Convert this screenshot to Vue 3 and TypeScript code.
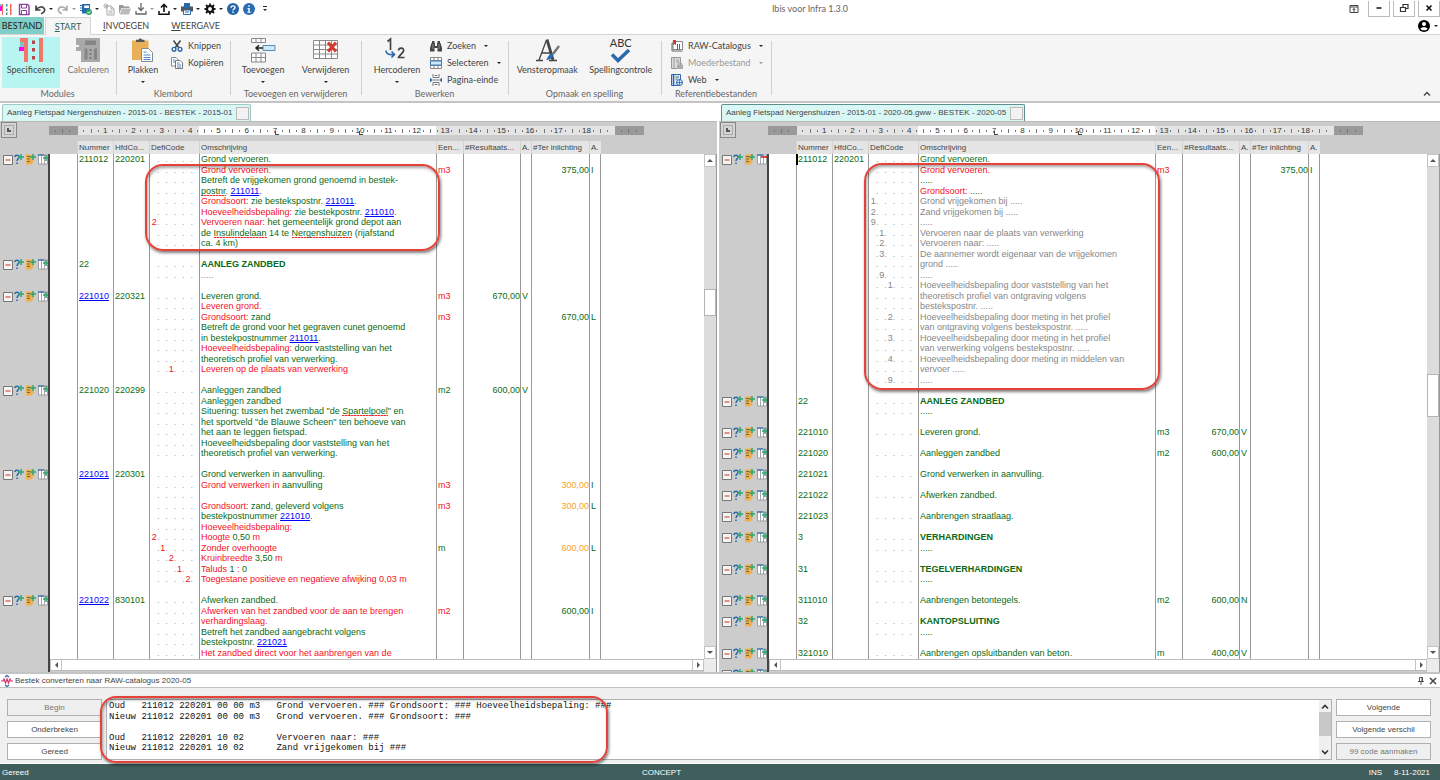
<script setup lang="ts">
interface Row {
  n?: string
  link?: boolean
  h?: string
  c?: string
  d?: string
  u?: string
  res?: string
  a?: string
  ter?: string
  b?: string
  blank?: boolean
  minus?: boolean
}
interface Seg { k: string; t: string }
interface Doc { title: string; rows: Row[]; thumb: string; caret: boolean }

/* Text markup: "r:" red, "g:" green, "x:" grey, "b:" bold, "l:" link, "s:" misspelled; parts split by "|". */
const parse = (s = ''): Seg[] =>
  s.split('|').filter(Boolean).map((p) => ({ k: p.slice(0, 1), t: p.slice(2) }))

/* Definition code: "<position><digit><colour>", for example "02r". */
const digit = (row: Row, i: number): string => (row.c && Number(row.c[0]) === i ? row.c[1] : '')

const gap: Row = { blank: true }

const left: Row[] = [
  { n: '211012', h: '220201', d: 'g:Grond vervoeren.' },
  { d: 'r:Grond vervoeren.', u: 'r:m3', ter: 'g:375,00', b: 'I' },
  { d: 'g:Betreft de vrijgekomen grond genoemd in bestek-' },
  { d: 's:postnr|g:. |l:211011|g:.' },
  { d: 'r:Grondsoort:|g: zie bestekspostnr. |l:211011|g:.' },
  { d: 'r:Hoeveelheidsbepaling:|g: zie bestekpostnr. |l:211010|g:.' },
  { c: '02r', d: 'r:Vervoeren naar:|g: het gemeentelijk grond depot aan' },
  { d: 'g:de |s:Insulindelaan|g: 14 te |s:Nergenshuizen|g: (rijafstand' },
  { d: 'g:ca. 4 km)' },
  gap,
  { n: '22', d: 'b:AANLEG ZANDBED' },
  { d: 'x:.....' },
  gap,
  { n: '221010', link: true, h: '220321', d: 'g:Leveren grond.', u: 'r:m3', res: '670,00', a: 'V' },
  { d: 'r:Leveren grond.' },
  { d: 'r:Grondsoort:|g: zand', u: 'r:m3', ter: 'g:670,00', b: 'L' },
  { d: 'g:Betreft de grond voor het gegraven cunet genoemd' },
  { d: 'g:in bestekpostnummer |l:211011|g:.' },
  { d: 'r:Hoeveelheidsbepaling:|g: door vaststelling van het' },
  { d: 'g:theoretisch profiel van verwerking.' },
  { c: '21r', d: 'r:Leveren op de plaats van verwerking' },
  gap,
  { n: '221020', h: '220299', d: 'g:Aanleggen zandbed', u: 'g:m2', res: '600,00', a: 'V' },
  { d: 'g:Aanleggen zandbed' },
  { d: 'g:Situering: tussen het zwembad "de |s:Spartelpoel|g:" en' },
  { d: 'g:het sportveld "de Blauwe Scheen" ten behoeve van' },
  { d: 'g:het aan te leggen fietspad.' },
  { d: 'g:Hoeveelheidsbepaling door vaststelling van het' },
  { d: 'g:theoretisch profiel van verwerking.' },
  gap,
  { n: '221021', link: true, h: '220301', d: 'g:Grond verwerken in aanvulling.' },
  { d: 'r:Grond verwerken in |g:aanvulling', u: 'r:m3', ter: 'o:300,00', b: 'I' },
  {},
  { d: 'r:Grondsoort:|g: zand, geleverd volgens', u: 'r:m3', ter: 'o:300,00', b: 'L' },
  { d: 'g:bestekpostnummer |l:221010|g:.' },
  { d: 'r:Hoeveelheidsbepaling:' },
  { c: '02r', d: 'r:Hoogte |g:0,50|r: m' },
  { c: '11r', d: 'r:Zonder overhoogte', u: 'g:m', ter: 'o:600,00', b: 'L' },
  { c: '22r', d: 'r:Kruinbreedte |g:3,50|r: m' },
  { c: '31r', d: 'r:Taluds |g:1 |r:: |g:0' },
  { c: '42r', d: 'r:Toegestane positieve en negatieve afwijking 0,03 m' },
  gap,
  { n: '221022', link: true, h: '830101', d: 'g:Afwerken zandbed.' },
  { d: 'r:Afwerken van het zandbed voor de aan te brengen', u: 'r:m2', ter: 'g:600,00', b: 'I' },
  { d: 'r:verhardingslaag.' },
  { d: 'g:Betreft het zandbed aangebracht volgens' },
  { d: 'g:bestekpostnr. |l:221021' },
  { d: 'r:Het zandbed direct voor het aanbrengen van de' },
  gap, gap,
]

const right: Row[] = [
  { n: '211012', h: '220201', d: 'g:Grond vervoeren.', minus: true },
  { d: 'r:Grond vervoeren.', u: 'r:m3', ter: 'g:375,00', b: 'I' },
  { d: 'g:.....' },
  { d: 'r:Grondsoort:|g: .....' },
  { c: '01x', d: 'x:Grond vrijgekomen bij .....' },
  { c: '02x', d: 'x:Zand vrijgekomen bij .....' },
  { c: '09x', d: 'x:.....' },
  { c: '11x', d: 'x:Vervoeren naar de plaats van verwerking' },
  { c: '12x', d: 'x:Vervoeren naar: .....' },
  { c: '13x', d: 'x:De aannemer wordt eigenaar van de vrijgekomen' },
  { d: 'x:grond .....' },
  { c: '19x', d: 'x:.....' },
  { c: '21x', d: 'x:Hoeveelheidsbepaling door vaststelling van het' },
  { d: 'x:theoretisch profiel van ontgraving volgens' },
  { d: 'x:bestekspostnr. .....' },
  { c: '22x', d: 'x:Hoeveelheidsbepaling door meting in het profiel' },
  { d: 'x:van ontgraving volgens bestekspostnr. .....' },
  { c: '23x', d: 'x:Hoeveelheidsbepaling door meting in het profiel' },
  { d: 'x:van verwerking volgens bestekspostnr. .....' },
  { c: '24x', d: 'x:Hoeveelheidsbepaling door meting in middelen van' },
  { d: 'x:vervoer .....' },
  { c: '29x', d: 'x:.....' },
  gap,
  { n: '22', d: 'b:AANLEG ZANDBED' },
  { d: 'g:.....' },
  gap,
  { n: '221010', d: 'g:Leveren grond.', u: 'g:m3', res: '670,00', a: 'V' },
  gap,
  { n: '221020', d: 'g:Aanleggen zandbed', u: 'g:m2', res: '600,00', a: 'V' },
  gap,
  { n: '221021', d: 'g:Grond verwerken in aanvulling.' },
  gap,
  { n: '221022', d: 'g:Afwerken zandbed.' },
  gap,
  { n: '221023', d: 'g:Aanbrengen straatlaag.' },
  gap,
  { n: '3', d: 'b:VERHARDINGEN' },
  { d: 'g:.....' },
  gap,
  { n: '31', d: 'b:TEGELVERHARDINGEN' },
  { d: 'g:.....' },
  gap,
  { n: '311010', d: 'g:Aanbrengen betontegels.', u: 'g:m2', res: '600,00', a: 'N' },
  gap,
  { n: '32', d: 'b:KANTOPSLUITING' },
  { d: 'g:.....' },
  gap,
  { n: '321010', d: 'g:Aanbrengen opsluitbanden van beton.', u: 'g:m', res: '400,00', a: 'V' },
  gap,
  { n: '321020' },
]

const docs: Doc[] = [
  { title: 'Aanleg Fietspad Nergenshuizen - 2015-01 - BESTEK - 2015-01', rows: left, thumb: 'thumb-a', caret: false },
  { title: 'Aanleg Fietspad Nergenshuizen - 2015-01 - 2020-05.gww - BESTEK - 2020-05', rows: right, thumb: 'thumb-b', caret: true },
]

const heads = ['', 'Nummer', 'HfdCo...', 'DefiCode', 'Omschrijving', 'Een...', '#Resultaats...', 'A.', '#Ter inlichting', 'A.']

/* Ruler marks, four to a centimetre. */
const marks = Array.from({ length: 85 }, (_, s) => {
  const cm = s / 4 - 1
  if (s % 4 === 0) return { cls: 'num', t: cm >= 1 && cm <= 18 ? String(cm) : '', stop: cm === 7 || cm === 10 }
  return { cls: s % 2 ? 'dot' : 'bar', t: '', stop: false }
})

const log = [
  'Oud   211012 220201 00 00 m3   Grond vervoeren. ### Grondsoort: ### Hoeveelheidsbepaling: ###',
  'Nieuw 211012 220201 00 00 m3   Grond vervoeren. ### Grondsoort: ###',
  '',
  'Oud   211012 220201 10 02      Vervoeren naar: ###',
  'Nieuw 211012 220201 10 02      Zand vrijgekomen bij ###',
]

const icons: Record<string, string> = {
  app: '<path d="M0 1h3v2H0z" fill="#7ec8c4"/><path d="M0 3h2v5H0z" fill="#f0f"/><path d="M2 1h1v11H2zM10 1h1.500v11H10z" fill="#f2655a"/><path d="M6 1h1.500v2.500H6zM6 5.500h1.500V8H6zM6 9.500h1.500V12H6z" fill="#4c8f8a"/>',
  save: '<path d="M1.500 1.500h8l1.500 1.500v8.500H1.500z" fill="#fff" stroke="#8a3f9d" stroke-width="1.400"/><path d="M3.500 1.500h5v3.500h-5z" fill="#fff" stroke="#8a3f9d"/><path d="M3.500 11V7.500h5V11" fill="#fff" stroke="#8a3f9d"/>',
  undo: '<path d="M2 2.500v4.500h4.500M2.500 6.500C4 4 9 2.500 10.500 6c.7 2-.8 4-3.500 4.800" fill="none" stroke="#444" stroke-width="1.700"/>',
  redo: '<path d="M10 2.500v4.500H5.500M9.500 6.500C8 4 3 2.500 1.500 6c-.7 2 .8 4 3.500 4.800" fill="none" stroke="#aaa" stroke-width="1.700"/>',
  book: '<path d="M2 1h8v9.500H2z" fill="#2b69ad"/><path d="M4.200 2.500H9V5H4.200z" fill="#fff"/><path d="M0 2.500h3M0 5h3M0 7.500h3" stroke="#2b69ad"/><circle cx="9" cy="9" r="3" fill="#2aa06b"/><path d="M7.500 9l1.200 1.200L10.600 8" fill="none" stroke="#fff"/>',
  new: '<path d="M4 3h4l3 3v6H4z" fill="#fff" stroke="#aaa"/><path d="M8 3v3h3M5.500 8h4M5.500 10h4" fill="none" stroke="#aaa"/><path d="M3 0v6M0 3h6M1 1l4 4M5 1L1 5" stroke="#aaa" stroke-width=".8"/>',
  folder: '<path d="M0 2h4l1 1.500h5.500V5H2.500L0 11z" fill="#999"/><path d="M3 5.500h9L10 11.500H.8z" fill="#bbb"/>',
  down: '<path d="M6 0v7M3.200 4.500L6 7.500l2.800-3" fill="none" stroke="#666" stroke-width="1.300"/><path d="M1 8v3h10V8" fill="none" stroke="#666" stroke-width="1.300"/>',
  up: '<path d="M6 9V1.500M3 4.500L6 1.300l3 3.200" fill="none" stroke="#111" stroke-width="1.600"/><path d="M1 8v3.200h10V8" fill="none" stroke="#111" stroke-width="1.500"/>',
  print: '<path d="M3 0h6v4H3z" fill="#2b69ad"/><path d="M0 3.500h12v5H0z" fill="#555"/><path d="M2.500 3.500h7V5h-7z" fill="#2b69ad"/><path d="M2.500 7h7v4.500h-7z" fill="#fff" stroke="#2b69ad"/><path d="M4 9h4" stroke="#2b69ad"/>',
  gear: '<circle cx="6" cy="6" r="3" fill="none" stroke="#111" stroke-width="2.200"/><path d="M6 .5V3M6 9v2.500M.5 6H3M9 6h2.500M2 2l1.800 1.800M8.200 8.200L10 10M10 2L8.200 3.800M3.800 8.200L2 10" stroke="#111" stroke-width="1.800"/>',
  help: '<circle cx="6" cy="6" r="6" fill="#2564a5"/><path d="M4 4.700C4 2.300 8 2.300 8 4.600 8 6 6 6 6 7.500" fill="none" stroke="#fff" stroke-width="1.400"/><path d="M5.300 8.500h1.400V10H5.300z" fill="#fff"/>',
  info: '<circle cx="6" cy="6" r="6" fill="#2b6db5"/><path d="M5.300 2.300h1.400v1.400H5.300zM4.500 5h2.200v3.700h1v1H4.300v-1h1V6h-.8z" fill="#fff"/>',
  cut: '<path d="M2.500.5L8 8M9.500.5L4 8" stroke="#444" stroke-width="1.500"/><circle cx="3" cy="9.300" r="1.900" fill="none" stroke="#2b69ad" stroke-width="1.400"/><circle cx="9" cy="9.300" r="1.900" fill="none" stroke="#2b69ad" stroke-width="1.400"/>',
  copy: '<path d="M.5.5h4.500l2 2V9H.5z" fill="#fff" stroke="#888"/><path d="M4.500 3.500H9l2.500 2.500v5.500h-7z" fill="#fff" stroke="#777"/><path d="M6 6h2.500M6 8h4M6 10h4M2 3h2M2 5h2" stroke="#4a86c5"/>',
  find: '<path d="M2 1h2.500v2H2zM7.500 1H10v2H7.500zM1.500 3h3.500v3h2V3h3.500l1.500 5v3.500H7.500V8h-3v3.500H0V8z" fill="#444"/><path d="M3 4v5M9 4v5" stroke="#aaa" stroke-width=".7"/>',
  select: '<path d="M.5.5h11v11H.5zM.5 3.500h11M.5 8.500h11M4 .5v3M8 .5v3M4 8.500v3M8 8.500v3" fill="#fff" stroke="#888"/><path d="M.5 4h11v4H.5z" fill="#cfe8fa" stroke="#3f7cb8"/>',
  page: '<path d="M3 0v3.500h6V0M3 12V8.500h6V12" fill="#fff" stroke="#777"/><path d="M4.500 1.500h3M4.500 10.500h3M2.500 6h7" stroke="#777"/><path d="M0 3.500L2.500 6 0 8.500zM12 3.500L9.500 6 12 8.500z" fill="#2b69ad"/>',
  raw: '<path d="M2 1.500h9.500v8H2z" fill="#fff" stroke="#888"/><path d="M1 3v8h10.500M6.500 4v5.500M8.500 4v5.500" fill="none" stroke="#666"/><path d="M2 0h3v5L3.500 4 2 5z" fill="#d0392b"/>',
  mother: '<path d="M.5.5h9v11h-9zM3 .5v11M5 3h3M5 5h3" fill="#ddd" stroke="#999"/><path d="M6 7.500h6V12H6z" fill="#aaa"/><path d="M7.500 7.500V6h3v1.500" fill="none" stroke="#aaa"/>',
  web: '<path d="M.5.5h9v11h-9z" fill="#dce9f6" stroke="#2b69ad"/><path d="M2.500.5v11" stroke="#2b69ad" stroke-width="1.500"/><path d="M4.500 3h3.500M4.500 5h2" stroke="#666"/><circle cx="8.500" cy="8.500" r="3" fill="#dce9f6" stroke="#2b69ad"/><path d="M5.500 8.500h6M8.500 5.500v6" stroke="#2b69ad" stroke-width=".8"/>',
  spec: '<path d="M2 0h8v4H2z" fill="#f2766a"/><path d="M2 4h5v5H2z" fill="#7cc7c4"/><path d="M1 9h5v4H1z" fill="#f0f"/><path d="M6 4h4v20H6zM21 0h4v24h-4z" fill="#f2766a"/><path d="M14 2.500h3V6h-3zM14 10h3v3.500h-3zM14 18h3v3.500h-3z" fill="#b5474a"/>',
  calc: '<path d="M0 0h24v24H5V13H0V9h3V7H0z" fill="#a9a9a9"/><path d="M9 2.500h11V7H9z" fill="#858585"/><path d="M8.500 10.500h3v11h-3zM18 10.500h3v11h-3z" fill="#858585"/><path d="M13.500 11h2v2h-2zM13.500 15h2v2h-2zM13.500 19h2v2h-2z" fill="#777"/>',
  paste: '<path d="M1 2.500h16.500V22H1z" fill="#e8b057"/><path d="M5 4V1.800h2.500C8 .2 10.500.2 11 1.800h2.500V4z" fill="#555"/><path d="M10.500 10.500h7l4 4v9h-11z" fill="#fff" stroke="#888"/><path d="M12.500 14h3M12.500 17h7M12.500 19.500h7M12.500 21.500h7" stroke="#4a86c5"/>',
  add: '<path d="M.5.5h14v4H.5zM5 .5v4M10 .5v4M.5 15h14v9H.5zM.5 19.500h14M5 15v9M10 15v9" fill="#fff" stroke="#888"/><path d="M12 7.500h12v5H12z" fill="#cfe8fa" stroke="#5a8db8"/><path d="M5 10h7M8 7.200L5 10l3 2.800" fill="none" stroke="#222" stroke-width="1.500"/>',
  del: '<path d="M.5 2.500h24v18H.5zM.5 7h24M.5 11.500h24M.5 16h24M6.500 2.500v18M12.500 2.500v18M18.500 2.500v18" fill="#fff" stroke="#888"/><path d="M15 4.500l8 9M23 4.500l-8 9" stroke="#d0392b" stroke-width="3"/>',
  recode: '<path d="M2.500 3.500L5.500 1v11M13.500 12.500c.5-3.500 6-3 5 .5-.5 2-4 4-5 6.500h6" fill="none" stroke="#444" stroke-width="1.700"/><path d="M1 12.500c0 3.500 3 4.500 8 4M6.500 13.500l3 3-3 3" fill="none" stroke="#2b69ad" stroke-width="1.700"/>',
  format: '<path d="M1 22.500h7M14 22.500h8M4 22L11.500 2M7 15h8" fill="none" stroke="#444" stroke-width="1.300"/><path d="M12 1.500L18 22" stroke="#444" stroke-width="2.800"/><path d="M24 8l-6 8" stroke="#777" stroke-width="2.500"/><path d="M17.500 15.500c2 2 .5 6-6.500 6.500 2-1.500 1.500-6 6.500-6.500z" fill="#2b69ad"/>',
  spell: '<path d="M1 5.500l6 6L18 1" fill="none" stroke="#2b69ad" stroke-width="3.500"/>',
  conv: '<path d="M0 6h2l1-2 1.500 4L6 4l1.500 4L9 4l1 2h2" fill="none" stroke="#d6336c" stroke-width="1.200"/><path d="M4 2l2-1.500L8 2M4 10l2 1.500L8 10" fill="none" stroke="#2b69ad" stroke-width="1.300"/>',
}

interface Quick { icon: string; label: string; menu?: boolean; off?: boolean }
const quick: Quick[] = [
  { icon: 'save', label: 'Opslaan' },
  { icon: 'undo', label: 'Ongedaan maken', menu: true },
  { icon: 'redo', label: 'Opnieuw', menu: true, off: true },
  { icon: 'book', label: 'Controleren', menu: true },
  { icon: 'new', label: 'Nieuw', off: true },
  { icon: 'folder', label: 'Openen', off: true },
  { icon: 'down', label: 'Importeren', menu: true, off: true },
  { icon: 'up', label: 'Exporteren', menu: true },
  { icon: 'print', label: 'Afdrukken', menu: true },
  { icon: 'gear', label: 'Instellingen', menu: true },
  { icon: 'help', label: 'Help' },
  { icon: 'info', label: 'Info' },
]

interface Cmd { icon: string; label: string; menu?: boolean; off?: boolean; on?: boolean; abc?: boolean }
interface Group { name: string; cls: string; big: Cmd[]; small: Cmd[] }
const groups: Group[] = [
  { name: 'Modules', cls: 'g1', big: [{ icon: 'spec', label: 'Specificeren', on: true }, { icon: 'calc', label: 'Calculeren', off: true }], small: [] },
  { name: 'Klembord', cls: 'g2', big: [{ icon: 'paste', label: 'Plakken', menu: true }], small: [{ icon: 'cut', label: 'Knippen' }, { icon: 'copy', label: 'Kopiëren' }] },
  { name: 'Toevoegen en verwijderen', cls: 'g3', big: [{ icon: 'add', label: 'Toevoegen', menu: true }, { icon: 'del', label: 'Verwijderen', menu: true }], small: [] },
  { name: 'Bewerken', cls: 'g4', big: [{ icon: 'recode', label: 'Hercoderen', menu: true }], small: [{ icon: 'find', label: 'Zoeken', menu: true }, { icon: 'select', label: 'Selecteren', menu: true }, { icon: 'page', label: 'Pagina-einde' }] },
  { name: 'Opmaak en spelling', cls: 'g5', big: [{ icon: 'format', label: 'Vensteropmaak' }, { icon: 'spell', label: 'Spellingcontrole', abc: true }], small: [] },
  { name: 'Referentiebestanden', cls: 'g6', big: [], small: [{ icon: 'raw', label: 'RAW-Catalogus', menu: true }, { icon: 'mother', label: 'Moederbestand', menu: true, off: true }, { icon: 'web', label: 'Web', menu: true }] },
]
</script>

<template>
  <div class="app">
    <header class="title">
      <svg class="i12" viewBox="0 0 12 12" v-html="icons.app" />
      <div class="quick">
        <button v-for="q in quick" :key="q.icon" :aria-label="q.label" :class="{ menu: q.menu, off: q.off }">
          <svg class="i12" viewBox="0 0 12 12" v-html="icons[q.icon]" />
          <i v-if="q.menu" class="caret" />
        </button>
        <button aria-label="Werkbalk aanpassen" class="more"><i class="caret" /></button>
      </div>
      <h1>Ibis voor Infra 1.3.0</h1>
      <div class="win">
        <button class="pin" aria-label="Lint weergeven"><svg class="i10" viewBox="0 0 10 10"><path d="M1 1.500h8v7H1zM1 3h8M5 8V4.500M3.500 6L5 4.500 6.500 6" fill="none" stroke="#444" /></svg></button>
        <button aria-label="Minimaliseren"><svg class="i10" viewBox="0 0 10 10"><path d="M2.500 5h5" stroke="#111" stroke-width="1.500" /></svg></button>
        <button aria-label="Herstellen"><svg class="i10" viewBox="0 0 10 10"><path d="M1.500 4.500h5v4h-5zM4 4V1.500h5v4H6.500" fill="none" stroke="#333" stroke-width="1.200" /></svg></button>
        <button aria-label="Sluiten"><svg class="i10" viewBox="0 0 10 10"><path d="M2.500 2.500l5 5M7.500 2.500l-5 5" stroke="#111" stroke-width="1.600" /></svg></button>
      </div>
    </header>

    <nav class="tabs">
      <button class="file">BESTAND</button>
      <button class="tab active"><u>S</u>TART</button>
      <button class="tab"><u>I</u>NVOEGEN</button>
      <button class="tab"><u>W</u>EERGAVE</button>
      <button class="user" aria-label="Gebruiker">
        <svg class="i12" viewBox="0 0 12 12"><circle cx="6" cy="6" r="6" /><circle cx="6" cy="4" r="2" fill="#fff" /><path d="M2.500 8.800C3 6.800 9 6.800 9.500 8.800 8 10.800 4 10.800 2.500 8.800z" fill="#fff" /></svg>
        <i class="caret" />
      </button>
    </nav>

    <section class="ribbon">
      <div v-for="g in groups" :key="g.name" class="group" :class="g.cls">
        <div class="cmds">
          <button v-for="c in g.big" :key="c.label" class="big" :class="{ on: c.on, off: c.off }">
            <template v-if="c.abc">
              <span class="abc">ABC</span>
              <svg class="tick" viewBox="0 0 19 14" v-html="icons[c.icon]" />
            </template>
            <svg v-else class="i25" viewBox="0 0 25 25" v-html="icons[c.icon]" />
            <span>{{ c.label }}</span>
            <i v-if="c.menu" class="caret" />
          </button>
          <div v-if="g.small.length" class="smalls">
            <button v-for="c in g.small" :key="c.label" class="small" :class="{ off: c.off }">
              <svg class="i12" viewBox="0 0 12 12" v-html="icons[c.icon]" />
              <span>{{ c.label }}</span>
              <i v-if="c.menu" class="caret" />
            </button>
          </div>
        </div>
        <div class="gname">{{ g.name }}</div>
      </div>
      <button class="fold" aria-label="Lint samenvouwen"><svg class="i10" viewBox="0 0 10 10"><path d="M2 6.500l3-3 3 3" fill="none" stroke="#444" stroke-width="1.400" /></svg></button>
    </section>

    <main class="docs">
      <section v-for="(doc, di) in docs" :key="di" class="pane">
        <div class="strip">
          <div class="doctab"><span>{{ doc.title }}</span><button aria-label="Tabblad sluiten" /></div>
        </div>
        <div class="rulerrow">
          <button class="corner" aria-label="Tabtype"><b /></button>
          <div class="ruler">
            <span v-for="(m, i) in marks" :key="i" :class="[m.cls, { stop: m.stop }]">{{ m.t }}</span>
          </div>
        </div>
        <div class="body">
          <div class="gutter">
            <div v-for="(row, i) in doc.rows" :key="i" class="line">
              <template v-if="row.n">
                <button aria-label="Inklappen"><svg viewBox="0 0 11 11"><path d="M1.500 1.500h9v9h-9z" fill="#f4f4f4" stroke="#777" /><path d="M3.500 6h5" stroke="#d8503f" stroke-width="1.200" /></svg></button>
                <button aria-label="Toelichting"><svg viewBox="0 0 11 11"><path d="M1 3C1 .6 5 .6 5 3c0 1.500-2 2-2 4M3 8.500V10" fill="none" stroke="#2b69ad" stroke-width="1.600" /><path d="M7 0v6M4 3h6" stroke="#2fa574" stroke-width="1.500" /></svg></button>
                <button aria-label="Tekst toevoegen"><svg viewBox="0 0 11 11"><path d="M0 .5h7.500V8l-2 2.500H0z" fill="#eeb04e" /><path d="M1 2.500h3M1 5h3M1 7.500h3" stroke="#7d6435" /><path d="M7 0v6M4 3h6" stroke="#2fa574" stroke-width="1.500" /></svg></button>
                <button aria-label="Regel toevoegen"><svg viewBox="0 0 11 11"><path d="M.5 1h9v9h-9zM3.500 1v9M6.500 1v9" fill="#fff" stroke="#8a8f96" stroke-width=".8" /><path d="M0 1h6" stroke="#2b69ad" stroke-width="1.200" /><path v-if="row.minus" d="M4 3h6" stroke="#d0392b" stroke-width="1.800" /><path v-else d="M8 1v6M5 4h6" stroke="#2fa574" stroke-width="1.500" /></svg></button>
              </template>
            </div>
          </div>
          <div class="content">
            <div class="sheet">
              <table>
                <colgroup><col v-for="(h, i) in heads" :key="i" :class="'c' + i"></colgroup>
                <thead>
                  <tr><th v-for="(h, i) in heads" :key="i">{{ h }}</th></tr>
                </thead>
                <tbody>
                  <tr v-for="(row, i) in doc.rows" :key="i">
                    <td />
                    <td :class="{ cursor: doc.caret && i === 0 }"><a v-if="row.link" href="#">{{ row.n }}</a><template v-else>{{ row.n }}</template></td>
                    <td>{{ row.h }}</td>
                    <td>
                      <div v-if="!row.blank" class="code">
                        <span v-for="k in 5" :key="k"><b v-if="digit(row, k - 1)" :class="'k-' + row.c?.[2]">{{ digit(row, k - 1) }}</b>.</span>
                      </div>
                    </td>
                    <td>
                      <template v-for="(s, j) in parse(row.d)" :key="j"><a v-if="s.k === 'l'" href="#">{{ s.t }}</a><span v-else :class="'k-' + s.k">{{ s.t }}</span></template>
                    </td>
                    <td><span v-for="(s, j) in parse(row.u)" :key="j" :class="'k-' + s.k">{{ s.t }}</span></td>
                    <td class="val">{{ row.res }}</td>
                    <td>{{ row.a }}</td>
                    <td class="val"><span v-for="(s, j) in parse(row.ter)" :key="j" :class="'k-' + s.k">{{ s.t }}</span></td>
                    <td>{{ row.b }}</td>
                  </tr>
                </tbody>
              </table>
            </div>
            <div class="hbar">
              <button aria-label="Naar links"><i class="arr l" /></button>
              <span />
              <button aria-label="Naar rechts"><i class="arr r" /></button>
            </div>
          </div>
          <div class="vbar">
            <button aria-label="Omhoog"><i class="arr u" /></button>
            <div class="track"><div :class="doc.thumb" /></div>
            <button aria-label="Omlaag"><i class="arr d" /></button>
            <div class="size" />
          </div>
        </div>
        <div class="mark" :class="'mark-' + di" />
      </section>
    </main>

    <section class="convert">
      <div class="ctitle">
        <svg class="i12" viewBox="0 0 12 12" v-html="icons.conv" />
        <h2>Bestek converteren naar RAW-catalogus 2020-05</h2>
        <button aria-label="Vastzetten"><svg class="i10" viewBox="0 0 10 10"><path d="M3.500 1.500h3v4h-3zM2 5.500h6M5 5.500V9M6 1.500v4" fill="none" stroke="#444" stroke-width=".9" /></svg></button>
        <button aria-label="Sluiten"><svg class="i10" viewBox="0 0 10 10"><path d="M2 2l6 6M8 2L2 8" stroke="#444" stroke-width="1.500" /></svg></button>
      </div>
      <div class="cbody">
        <div class="btns">
          <button disabled>Begin</button>
          <button>Onderbreken</button>
          <button>Gereed</button>
        </div>
        <div class="logbox">
          <div class="log" role="log">
            <div v-for="(l, i) in log" :key="i">{{ l }}</div>
          </div>
          <div class="lbar">
            <svg class="i10" viewBox="0 0 10 10"><path d="M2 6.500l3-3 3 3" fill="none" stroke="#333" stroke-width="1.600" /></svg>
            <div class="ltrack"><div /></div>
            <svg class="i10" viewBox="0 0 10 10"><path d="M2 3.500l3 3 3-3" fill="none" stroke="#333" stroke-width="1.600" /></svg>
          </div>
        </div>
        <div class="btns">
          <button>Volgende</button>
          <button>Volgende verschil</button>
          <button disabled>99 code aanmaken</button>
        </div>
        <div class="mark mark-2" />
      </div>
    </section>

    <footer class="status">
      <span>Gereed</span>
      <span class="mid">CONCEPT</span>
      <span class="end"><span>INS</span><span>8-11-2021</span></span>
    </footer>
  </div>
</template>

<style>
body { margin: 0; }
</style>

<style scoped>
.app {
  display: flex;
  flex-direction: column;
  height: 100vh;
  overflow: hidden;
  background: #fff;
  color: #444;
  font: 9px/12px Lato, "Noto Sans", sans-serif;
}
button {
  display: flex;
  align-items: center;
  margin: 0;
  padding: 0;
  border: 0;
  background: none;
  color: inherit;
  font: inherit;
}
svg { display: block; flex: none; overflow: visible; }
.i12 { width: 12px; height: 12px; }
.i10 { width: 10px; height: 10px; }
.i25 { width: 25px; height: 25px; }
.caret { flex: none; width: 0; border: 2px solid transparent; border-top: 2px solid #222; border-bottom: 0; }
.off .caret { border-top-color: #999; }

.title { display: grid; grid-template-columns: 12px 1fr auto 1fr; align-items: center; flex: none; height: 17px; }
.title h1 { margin: 0 0 0 168px; font-size: 9px; font-weight: 400; color: #666; }
.quick { display: flex; align-items: center; gap: 4px; padding-left: 6px; }
.quick button.menu { gap: 3px; }
.quick .more { margin-left: 4px; padding-top: 2px; border-top: 1px solid #222; }
.win { display: flex; justify-content: flex-end; gap: 3px; height: 16px; }
.win button { justify-content: center; width: 22px; box-sizing: border-box; border: 1px solid #bbb; border-top: 0; }
.win .pin { border: 0; }

.tabs { display: flex; flex: none; height: 18px; box-sizing: border-box; border-bottom: 1px solid #d4d4d4; }
.tabs button { justify-content: center; }
.file { width: 44px; background: #7fcfc8; color: #222; }
.tab { margin-right: 10px; }
.tab.active { width: 46px; margin: 0 12px 0 1px; height: 18px; border: 1px solid #d4d4d4; border-bottom: 0; box-sizing: border-box; background: #f5f5f5; color: #2b5f5c; }
.tab + .tab:not(.active) { padding-right: 12px; }
.tabs .user { margin-left: auto; gap: 4px; padding-right: 2px; }

.ribbon { display: flex; flex: none; height: 66px; border-bottom: 2px solid #c4c4c4; background: #f5f5f5; }
.group { display: flex; flex-direction: column; padding: 2px 0 0 2px; box-sizing: border-box; background: linear-gradient(#d0d0d0, #d0d0d0) right 6px / 1px 54px no-repeat; }
.cmds { display: flex; flex: 1; }
.gname { height: 13px; margin-right: 4px; text-align: center; color: #666; }
.g1 { width: 117px; }
.g2 { width: 114px; }
.g3 { width: 131px; }
.g4 { width: 147px; }
.g5 { width: 153px; }
.g6 { width: 110px; }
.g3 .cmds, .g5 .cmds { justify-content: space-around; padding: 0 4px 0 0; }
.g2 .cmds { margin-left: -2px; }
.big { flex-direction: column; height: 51px; padding-top: 1px; box-sizing: border-box; }
.big span { margin-top: 1px; height: 14px; }
.big .caret { margin-top: 3px; }
.g1 .big { width: 59px; }
.g2 .big { width: 52px; }
.g4 .big { width: 66px; }
.big.on { background: #b6f5f0; }
.big .abc { margin: 0; height: 10px; font-size: 11px; line-height: 10px; color: #333; }
.big .tick { width: 19px; height: 14px; margin: 1px 0 0; }
.off { color: #999; }
.g1 .off { color: #777; }
.smalls { display: flex; flex-direction: column; }
.small { height: 17px; gap: 5px; }
.small .caret { margin-left: 3px; }
.g2 .smalls { padding-left: 2px; }
.g6 .smalls { padding-left: 7px; }
.fold { align-self: flex-end; margin: 0 8px 2px auto; }

.docs { display: grid; grid-template-columns: 717fr 721fr; gap: 2px; flex: 1; min-height: 0; }
.pane { position: relative; display: flex; flex-direction: column; min-width: 0; min-height: 0; font: 8px/10px "Liberation Sans", Arial, sans-serif; }
.strip { display: flex; flex: none; height: 19px; align-items: flex-end; padding-left: 2px; border-bottom: 1px solid #b8b8b8; box-sizing: border-box; }
.doctab { display: flex; align-items: center; gap: 4px; height: 16px; padding: 0 1px 0 4px; border: 1px solid #9fc9c6; border-bottom: 0; background: #d9f7f4; border-radius: 2px 2px 0 0; }
.pane + .pane .doctab { border-color: #5d8f8c; }
.doctab button { width: 13px; height: 13px; border: 1px solid #bbb; background: #f2f2f2; box-sizing: border-box; }
.rulerrow { display: flex; flex: none; height: 19px; background: #ccc; }
.corner { justify-content: center; width: 16px; height: 16px; margin: 0 28px 0 1px; border: 1px solid #888; outline: 1px solid #aaa; outline-offset: -4px; background: #d4d4d4; box-sizing: border-box; }
.corner b { width: 4px; height: 4px; border: solid #555; border-width: 0 0 2px 2px; box-sizing: border-box; }
.ruler {
  display: flex; width: 602px; height: 9px; margin-top: 4px; color: #333; line-height: 9px;
  background: linear-gradient(90deg, transparent 4px, #999 4px 33px, #e4e4e4 33px 154px, #fff 154px 391px, #e4e4e4 391px 570px, #999 570px 599px, transparent 599px);
}
.ruler span { position: relative; display: flex; flex: 1 1 0; width: 0; justify-content: center; align-items: center; }
.dot::before { content: ""; width: 1px; height: 2px; background: #777; }
.bar::before { content: ""; width: 1px; height: 4px; background: #777; }
.stop::after { content: ""; position: absolute; left: 3px; top: 5px; width: 3px; height: 3px; border: solid #444; border-width: 0 0 1px 1px; }

.body { display: flex; flex: 1; min-height: 0; background: #ccc; }
.gutter { flex: none; width: 48px; margin-top: 13px; overflow: hidden; border-right: 2px solid #444; }
.line { display: flex; height: 11px; padding-left: 2px; }
.line:nth-child(even) { height: 10px; }
.line button { height: 11px; margin-right: 1px; }
.line svg { width: 11px; height: 11px; }
.content { display: flex; flex-direction: column; flex: 1; min-width: 0; }
.sheet { flex: 1; min-height: 0; overflow: hidden; background: linear-gradient(#ccc 13px, #fff 13px); }
table { width: 551px; table-layout: fixed; border-collapse: separate; border-spacing: 0; color: #0b6b14; }
.c0 { width: 27px; }
.c1, .c2 { width: 36px; }
.c3 { width: 50px; }
.c4 { width: 237px; }
.c5 { width: 27px; }
.c6 { width: 57px; }
.c7 { width: 11px; }
.c8 { width: 58px; }
.c9 { width: 12px; }
th { height: 13px; padding: 0 0 0 1px; background: #e5e5e5; border-left: 1px solid #d2d2d2; box-sizing: border-box; color: #444; font-size: 8px; font-weight: 400; line-height: 13px; text-align: left; white-space: nowrap; overflow: hidden; }
th:first-child { background: none; border: 0; }
td { height: 11px; padding: 0 0 0 1px; box-sizing: border-box; border-left: 1px solid #9a9a9a; font-size: 9px; line-height: 11px; white-space: nowrap; }
tr:nth-child(even) td { height: 10px; line-height: 10px; }
td:first-child { border: 0; }
td:last-child { border-right: 1px solid #9a9a9a; }
td.val { padding: 0; text-align: right; }
td.cursor { border-left: 2px solid #000; padding: 0; }
.code { display: grid; grid-template-columns: repeat(5, 1fr); width: 42px; color: #a0a0a0; text-align: right; }
.code span { display: flex; justify-content: flex-end; }
.code b { font-weight: 400; }
a { color: #00f; text-decoration: underline; }
.k-r { color: #f5101c; }
.k-x { color: #888; }
.k-o { color: #f9a11b; }
.k-b { font-weight: 700; }
.k-s { background: repeating-linear-gradient(90deg, #f22 0 2px, #f99 2px 3px) left bottom / 100% 1px no-repeat; }

.hbar { display: flex; flex: none; height: 12px; border: 1px solid #bbb; border-width: 1px 0; margin-bottom: 1px; box-sizing: border-box; background: #fff; }
.hbar span { flex: 1; }
.hbar button, .vbar button { justify-content: center; width: 12px; background: #fff; box-sizing: border-box; border: 1px solid #c4c4c4; }
.hbar button { border-width: 0 1px; }
.vbar { display: flex; flex-direction: column; flex: none; width: 12px; margin-top: 13px; background: #dcdcdc; border-right: 1px solid #999; }
.vbar button { height: 13px; }
.vbar .size { height: 13px; background: #ececec; }
.track { display: flex; flex-direction: column; flex: 1; }
.track div { background: #fff; border: 1px solid #b4b4b4; }
.track::before { content: ""; }
.thumb-a { flex: 0 0 25px; }
.thumb-b { flex: 0 0 41px; }
.track:has(.thumb-a)::before { flex: 0 0 122px; }
.track:has(.thumb-b)::before { flex: 0 0 207px; }
.arr { width: 0; height: 0; border: 3px solid transparent; }
.arr.u { border-top: 0; border-bottom-color: #555; }
.arr.d { border-bottom: 0; border-top-color: #555; }
.arr.l { border-left: 0; border-right-color: #555; }
.arr.r { border-right: 0; border-left-color: #555; }

.mark { position: absolute; box-sizing: border-box; border: 2px solid #e5423a; border-radius: 18px; box-shadow: 1px 2px 3px rgba(0, 0, 0, .5), inset 1px 2px 3px rgba(0, 0, 0, .35); pointer-events: none; }
.mark-0 { left: 145px; top: 61px; width: 295px; height: 87px; }
.mark-1 { left: 145px; top: 60px; width: 296px; height: 227px; }
.mark-2 { left: 100px; top: 8px; width: 508px; height: 67px; border-radius: 16px; }

.convert { flex: none; border-top: 2px solid #c4c4c4; background: #f0f0f0; font: 8px/10px "Liberation Sans", Arial, sans-serif; }
.ctitle { display: flex; align-items: center; gap: 2px; height: 13px; padding: 0 2px 0 1px; background: #fff; border-bottom: 1px solid #c0c0c0; }
.ctitle h2 { margin: 0 auto 0 0; font-size: 8px; font-weight: 400; }
.cbody { position: relative; display: flex; gap: 4px; height: 61px; padding: 11px 9px 3px 7px; }
.btns { display: flex; flex-direction: column; justify-content: space-between; width: 95px; }
.btns button { justify-content: center; height: 17px; border: 1px solid #b0b0b0; background: #fff; box-sizing: border-box; }
.btns button:disabled { background: #efefef; color: #777; }
.logbox { display: flex; flex: 1; box-sizing: border-box; border: 1px solid #b0b0b0; background: #fff; }
.log { flex: 1; padding: 1px 0 0 2px; color: #111; font: 9px/11px "Liberation Mono", "Courier New", monospace; white-space: pre; }
.log div { height: 11px; }
.log div:nth-child(even) { height: 10px; }
.lbar { display: flex; flex-direction: column; align-items: center; width: 12px; padding: 2px 0; background: #f0f0f0; }
.ltrack { flex: 1; align-self: stretch; }
.ltrack div { height: 24px; background: #c8c8c8; }

.status { display: grid; grid-template-columns: 1fr auto 1fr; align-items: center; flex: none; height: 16px; padding: 1px 10px 0 2px; box-sizing: border-box; margin-top: 1px; background: #405e5c; color: #fff; font: 8px/10px "Liberation Sans", Arial, sans-serif; }
.status .mid { margin-right: 109px; }
.status .end { display: flex; justify-content: flex-end; gap: 12px; }
</style>
